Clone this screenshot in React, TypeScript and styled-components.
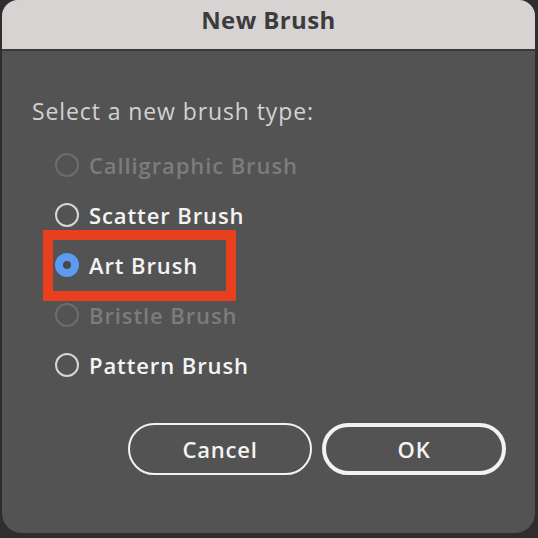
import React from "react";
import styled, { createGlobalStyle } from "styled-components";

const Global = createGlobalStyle`
  html, body { margin: 0; padding: 0; background: #2e2e2e; }
  body { width: 538px; height: 538px; overflow: hidden; font-family: "Open Sans", "Noto Sans", sans-serif; }
`;

const Page = styled.div`
  width: 538px;
  height: 538px;
  padding: 0 3px 5px 2px;
  box-sizing: border-box;
  display: flex;
`;

const Dialog = styled.div`
  flex: 1;
  display: flex;
  flex-direction: column;
  background: #535353;
  border-radius: 16px 16px 20px 20px;
  overflow: hidden;
`;

const TitleBar = styled.div`
  height: 51px;
  box-sizing: border-box;
  padding-top: 4px;
  background: #d8d3d3;
  border-bottom: 2px solid #3a3a3a;
  display: flex;
  align-items: flex-start;
  justify-content: center;
  color: #3c3c3c;
  font-weight: 700;
  font-size: 24px;
  line-height: 32px;
  letter-spacing: 0.4px;
`;

const Body = styled.div`
  display: flex;
  flex-direction: column;
  padding: 0 29px 0 30px;
`;

const Prompt = styled.div`
  margin-top: 48px;
  line-height: 24px;
  font-size: 23px;
  letter-spacing: 0.9px;
  color: #d2d2d2;
`;

const List = styled.div`
  margin-top: 17px;
  display: flex;
  flex-direction: column;
`;

const Row = styled.div<{ $disabled?: boolean }>`
  position: relative;
  height: 50px;
  display: flex;
  align-items: center;
  gap: 10px;
  padding-left: 23px;
  font-size: 22px;
  font-weight: 600;
  letter-spacing: 0.9px;
  color: ${(p) => (p.$disabled ? "#7c7c7c" : "#f4f4f4")};
`;

const Circle = styled.span<{ $disabled?: boolean; $checked?: boolean }>`
  width: 24px;
  height: 24px;
  box-sizing: border-box;
  border-radius: 50%;
  flex: none;
  position: relative;
  ${(p) =>
    p.$checked
      ? `background: #5b9bf0;`
      : `border: 2px solid ${p.$disabled ? "#6c6c6c" : "#d6d6d6"};`}
`;

const Dot = styled.span`
  position: absolute;
  left: 8px;
  top: 8px;
  width: 8px;
  height: 8px;
  border-radius: 50%;
  background: #474747;
`;

const Highlight = styled.div`
  position: absolute;
  left: 11px;
  top: -10px;
  width: 193px;
  height: 71px;
  box-sizing: border-box;
  border: 10px solid #e8401f;
  pointer-events: none;
`;

const Buttons = styled.div`
  margin-top: 33px;
  display: flex;
  justify-content: flex-end;
  gap: 10px;
`;

const Button = styled.div<{ $primary?: boolean }>`
  width: 184px;
  height: 52px;
  box-sizing: border-box;
  border-radius: 26px;
  border: ${(p) => (p.$primary ? "4px" : "2px")} solid #f2f2f2;
  display: flex;
  align-items: center;
  justify-content: center;
  color: #f4f4f4;
  font-size: 22px;
  font-weight: 600;
  letter-spacing: 0.8px;
`;

const options = [
  { label: "Calligraphic Brush", disabled: true },
  { label: "Scatter Brush" },
  { label: "Art Brush", checked: true },
  { label: "Bristle Brush", disabled: true },
  { label: "Pattern Brush" },
];

export default function App() {
  return (
    <>
      <Global />
      <Page>
        <Dialog>
          <TitleBar>New Brush</TitleBar>
          <Body>
            <Prompt>Select a new brush type:</Prompt>
            <List>
              {options.map((o) => (
                <Row key={o.label} $disabled={o.disabled}>
                  <Circle $disabled={o.disabled} $checked={o.checked}>
                    {o.checked && <Dot />}
                  </Circle>
                  {o.label}
                  {o.checked && <Highlight />}
                </Row>
              ))}
            </List>
            <Buttons>
              <Button>Cancel</Button>
              <Button $primary>OK</Button>
            </Buttons>
          </Body>
        </Dialog>
      </Page>
    </>
  );
}
